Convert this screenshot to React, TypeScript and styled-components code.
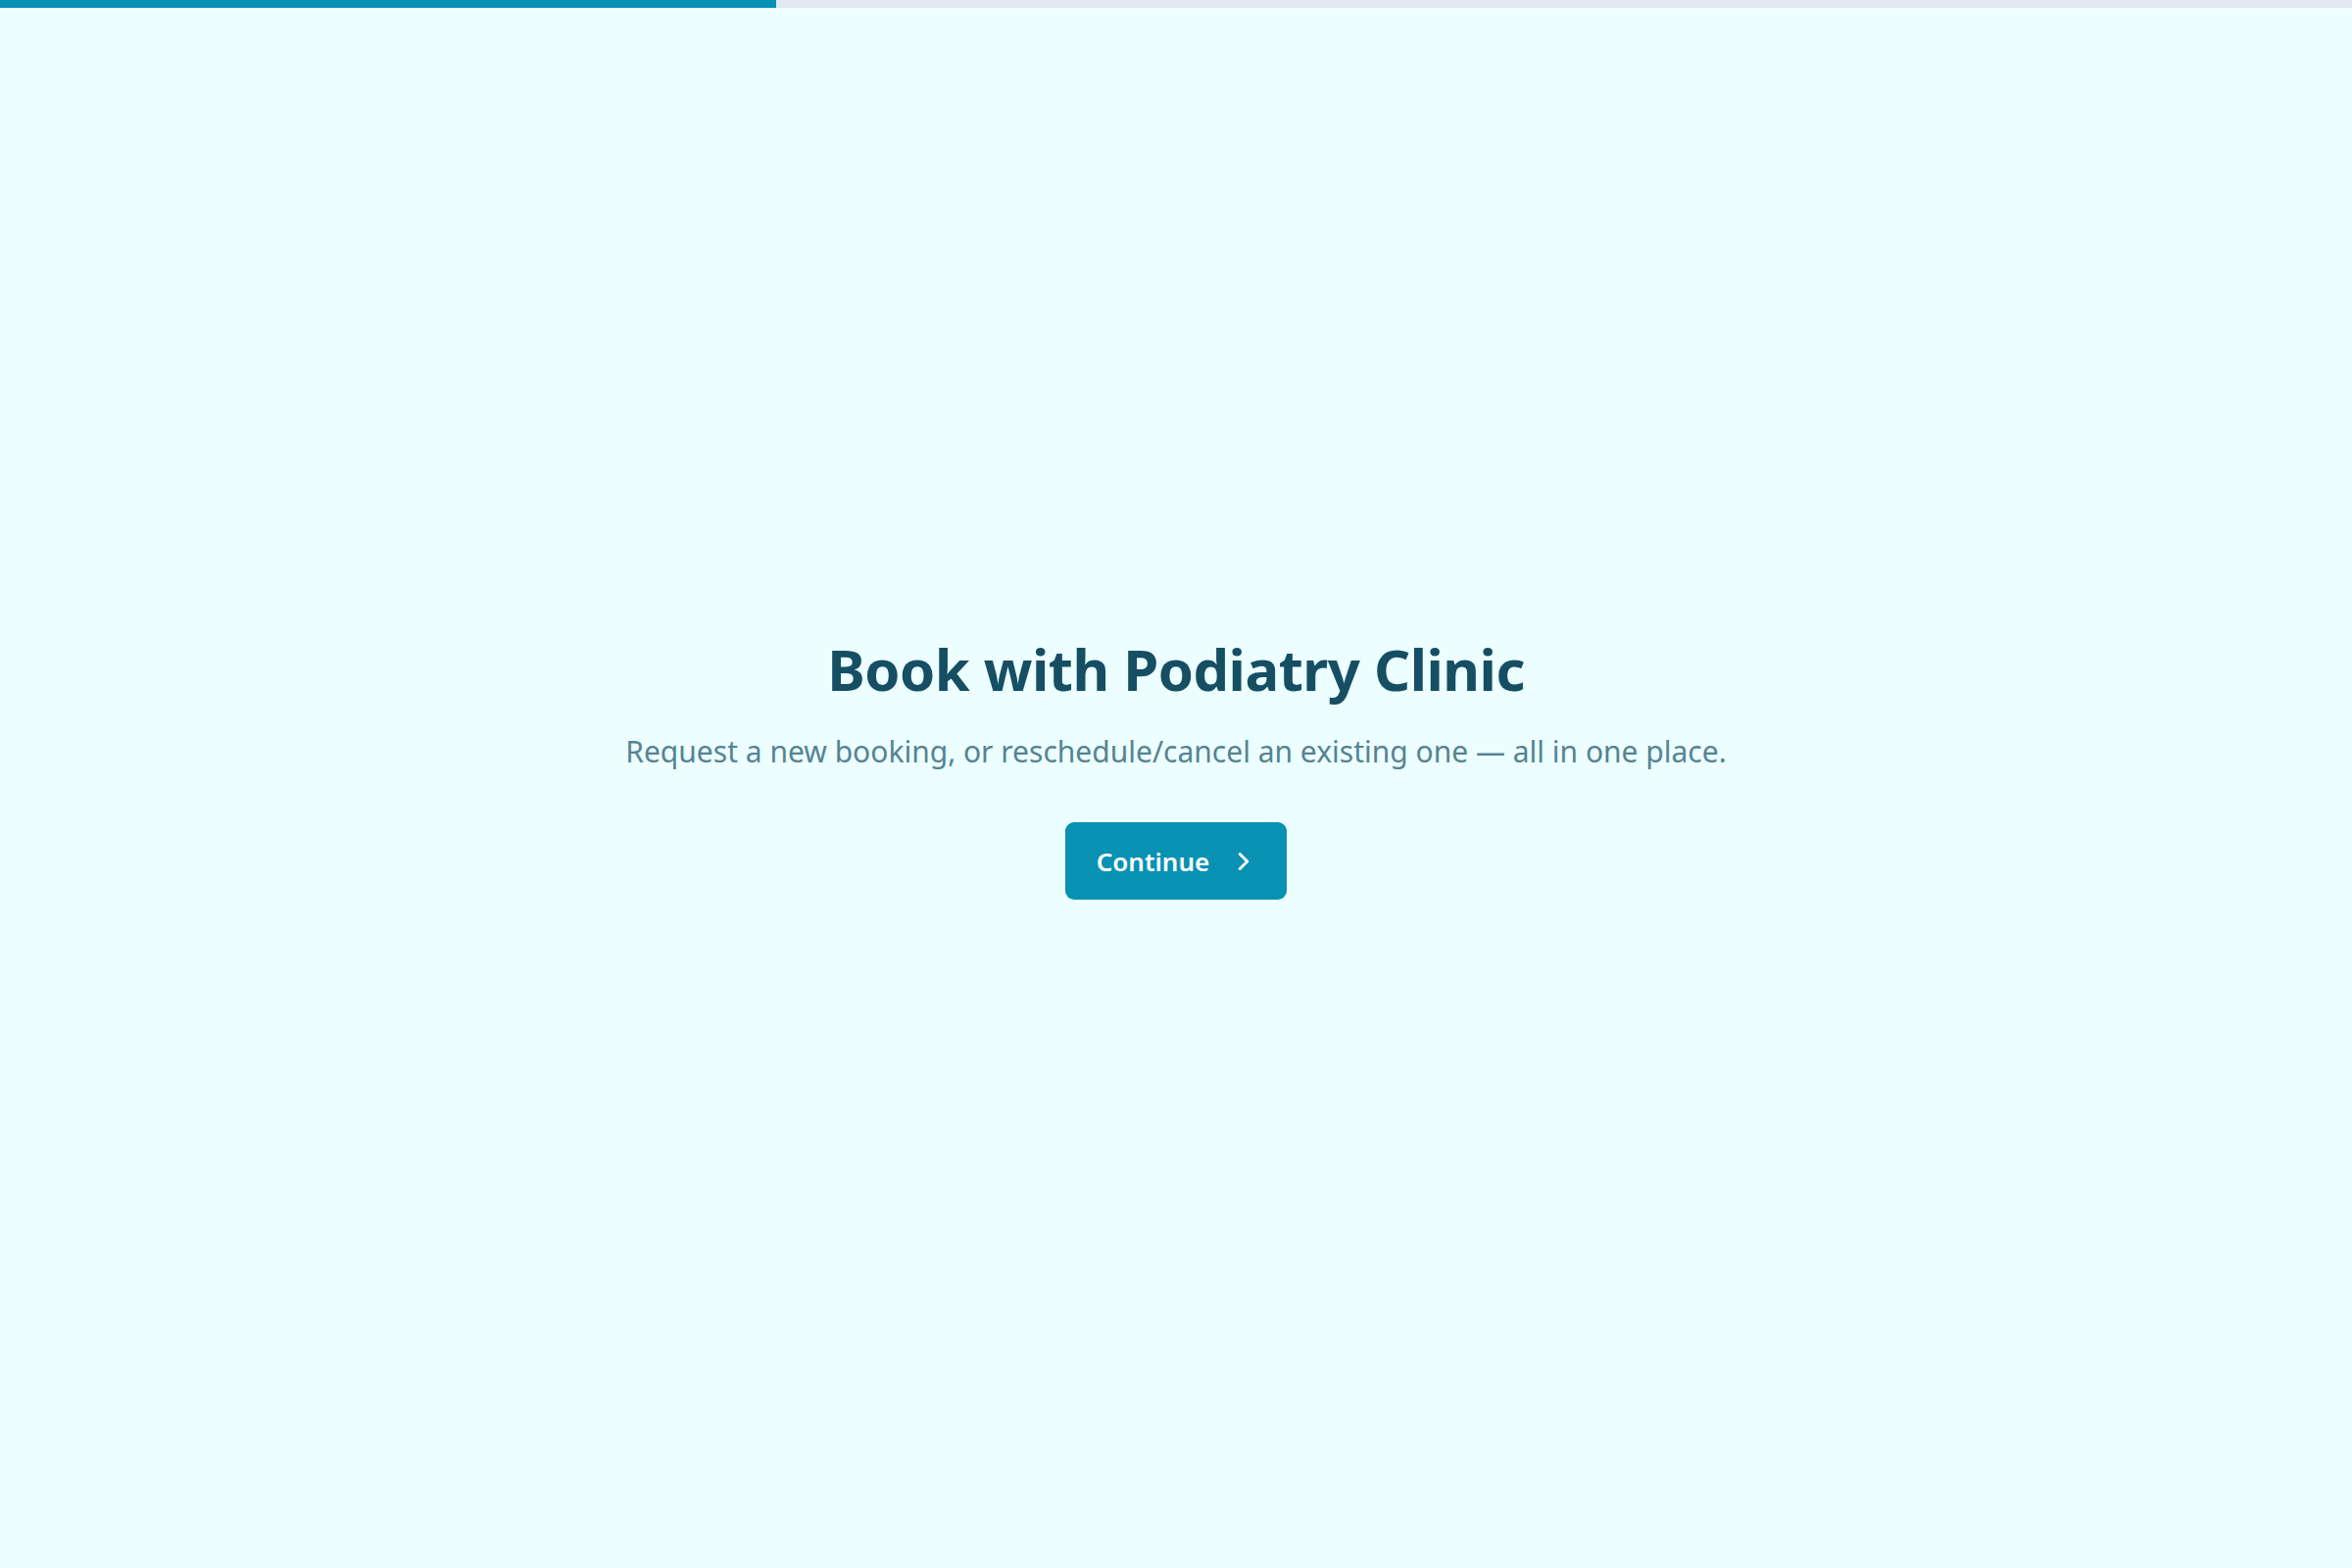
import React from "react";
import styled, { createGlobalStyle } from "styled-components";
import { ChevronRight } from "lucide-react";

const GlobalStyle = createGlobalStyle`
  html, body { margin: 0; padding: 0; }
  body {
    background: #ecfeff;
    font-family: "Noto Sans", "Open Sans", "Liberation Sans", sans-serif;
  }
`;

const Page = styled.div`
  min-height: 100vh;
  display: flex;
  flex-direction: column;
  background: #ecfeff;
`;

const ProgressTrack = styled.div`
  height: 8px;
  width: 100%;
  background: #e2e8f0;
  display: flex;
`;

const ProgressFill = styled.div`
  height: 100%;
  background: #0891b2;
`;

const Main = styled.main`
  flex: 1;
  display: flex;
  flex-direction: column;
  align-items: center;
  justify-content: center;
  padding-bottom: 43px;
  text-align: center;
`;

const Title = styled.h1`
  margin: 0;
  font-size: 58px;
  line-height: 72px;
  font-weight: 700;
  color: #164e63;
  letter-spacing: -0.5px;
`;

const Subtitle = styled.p`
  margin: 25px 0 0;
  font-size: 30px;
  line-height: 45px;
  color: #568392;
`;

const Button = styled.button`
  margin-top: 50px;
  display: inline-flex;
  align-items: center;
  gap: 20px;
  height: 79px;
  padding: 0 29px 0 32px;
  border: none;
  border-radius: 9px;
  background: #0891b2;
  color: #ffffff;
  font-family: inherit;
  font-size: 26px;
  font-weight: 600;
  cursor: pointer;
`;

export default function App() {
  const progress = 33;
  return (
    <>
      <GlobalStyle />
      <Page>
        <ProgressTrack>
          <ProgressFill style={{ width: `${progress}%` }} />
        </ProgressTrack>
        <Main>
          <Title>Book with Podiatry Clinic</Title>
          <Subtitle>
            Request a new booking, or reschedule/cancel an existing one — all in one place.
          </Subtitle>
          <Button>
            Continue
            <ChevronRight size={30} strokeWidth={2.4} />
          </Button>
        </Main>
      </Page>
    </>
  );
}
